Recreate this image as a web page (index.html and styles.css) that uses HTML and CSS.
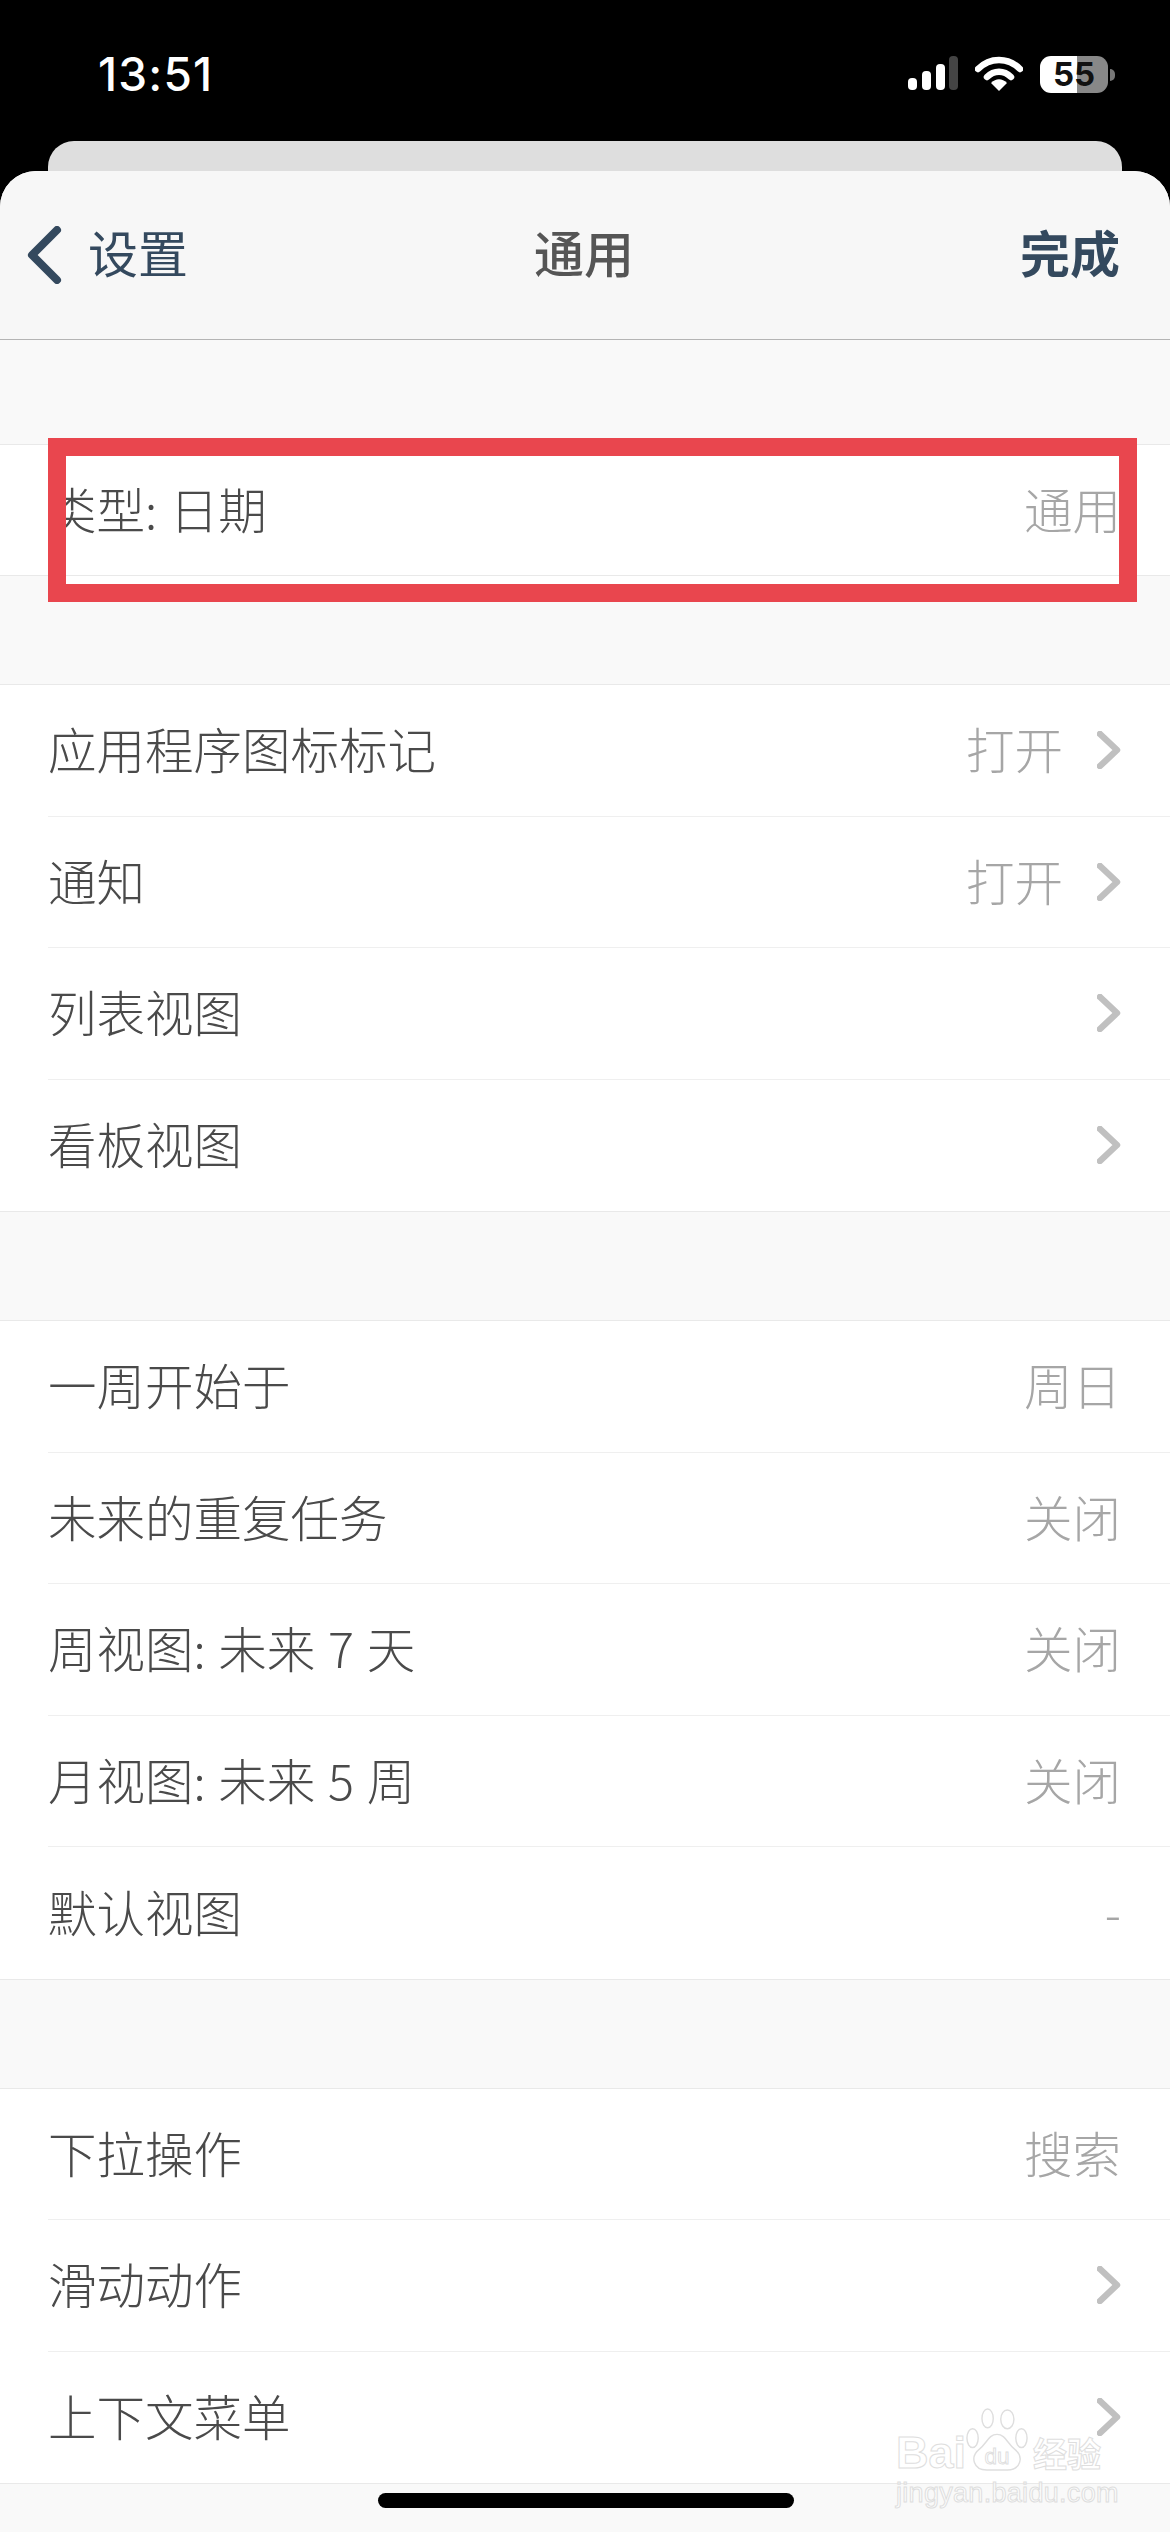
FILE: index.html
```html
<!DOCTYPE html>
<html lang="zh-CN">
  <head>
    <meta charset="UTF-8" />
    <meta name="viewport" content="width=device-width, initial-scale=1.0" />
    <title>通用</title>
    <link rel="stylesheet" href="styles.css">
  </head>
  <body>
    <div class="status">
      <span class="time">13:51</span>
      <div class="status-icons">
        <svg class="signal" width="50" height="34" viewBox="0 0 50 34">
          <rect x="0" y="22" width="9" height="12" rx="4" fill="#fff" />
          <rect x="14" y="15" width="9" height="19" rx="4" fill="#fff" />
          <rect x="28" y="8" width="9" height="26" rx="4" fill="#fff" />
          <rect x="41" y="0" width="9" height="34" rx="4" fill="#444" />
        </svg>
        <svg class="wifi" width="48" height="35" viewBox="0 0 48 35">
          <path d="M3 13 C15 1 33 1 45 13" fill="none" stroke="#fff" stroke-width="6.5" stroke-linecap="round" />
          <path d="M12 21 C19 14 29 14 36 21" fill="none" stroke="#fff" stroke-width="6.5" stroke-linecap="round" />
          <path d="M16 27 C21 22 27 22 32 27 L24 35 Z" fill="#fff" />
        </svg>
        <div class="battery">
          <div class="battery-body"><span class="battery-level">55</span></div>
          <span class="battery-nub"></span>
        </div>
      </div>
    </div>
    <div class="back-card"></div>

    <div class="sheet">
      <div class="nav">
        <div class="nav-back">
          <svg width="36" height="58" viewBox="0 0 36 58">
            <path d="M31 4 L6 29 L31 54" fill="none" stroke="#34495e" stroke-width="8" stroke-linecap="round" stroke-linejoin="round" />
          </svg>
          <span class="nav-text">设置</span>
        </div>
        <div class="nav-title nav-text">通用</div>
        <div class="nav-done nav-text">完成</div>
      </div>

      <div class="group group-first">
        <div class="row">
          <span class="label">类型: 日期</span>
          <span class="value">通用</span>
        </div>
        <div class="marker"></div>
      </div>

      <div class="group">
        <div class="row">
          <span class="label">应用程序图标标记</span>
          <span class="value">打开</span>
          <svg class="chevron" width="24" height="38" viewBox="0 0 24 38"><path d="M3 3 L20 19 L3 35" /></svg>
        </div>
        <div class="row">
          <span class="label">通知</span>
          <span class="value">打开</span>
          <svg class="chevron" width="24" height="38" viewBox="0 0 24 38"><path d="M3 3 L20 19 L3 35" /></svg>
        </div>
        <div class="row">
          <span class="label">列表视图</span>
          <svg class="chevron" width="24" height="38" viewBox="0 0 24 38"><path d="M3 3 L20 19 L3 35" /></svg>
        </div>
        <div class="row">
          <span class="label">看板视图</span>
          <svg class="chevron" width="24" height="38" viewBox="0 0 24 38"><path d="M3 3 L20 19 L3 35" /></svg>
        </div>
      </div>

      <div class="group">
        <div class="row">
          <span class="label">一周开始于</span>
          <span class="value">周日</span>
        </div>
        <div class="row">
          <span class="label">未来的重复任务</span>
          <span class="value">关闭</span>
        </div>
        <div class="row">
          <span class="label">周视图: 未来 7 天</span>
          <span class="value">关闭</span>
        </div>
        <div class="row">
          <span class="label">月视图: 未来 5 周</span>
          <span class="value">关闭</span>
        </div>
        <div class="row">
          <span class="label">默认视图</span>
          <span class="value">-</span>
        </div>
      </div>

      <div class="group">
        <div class="row">
          <span class="label">下拉操作</span>
          <span class="value">搜索</span>
        </div>
        <div class="row">
          <span class="label">滑动动作</span>
          <svg class="chevron" width="24" height="38" viewBox="0 0 24 38"><path d="M3 3 L20 19 L3 35" /></svg>
        </div>
        <div class="row">
          <span class="label">上下文菜单</span>
          <svg class="chevron" width="24" height="38" viewBox="0 0 24 38"><path d="M3 3 L20 19 L3 35" /></svg>
        </div>
      </div>

      <div class="home-bar"></div>

      <div class="watermark">
        <div class="wm-logo">
          <span class="wm-text">Bai</span>
          <svg class="wm-paw" width="62" height="66" viewBox="0 0 66 68">
            <ellipse cx="7" cy="32" rx="6" ry="10" />
            <ellipse cx="23" cy="11" rx="6" ry="10" />
            <ellipse cx="44" cy="12" rx="7" ry="10" />
            <ellipse cx="59" cy="32" rx="6" ry="10" />
            <path d="M33 28 C24 28 22 38 14 44 C4 52 8 66 22 66 L44 66 C58 66 62 52 52 44 C44 38 42 28 33 28 Z" />
            <text x="33" y="60" text-anchor="middle">du</text>
          </svg>
          <span class="wm-text wm-cn">经验</span>
        </div>
        <div class="wm-url">jingyan.baidu.com</div>
      </div>
    </div>
  </body>
</html>
```

FILE: styles.css
```css
html,
body {
  margin: 0;
  background: #000;
}
body {
  width: 1170px;
  height: 2532px;
  overflow: hidden;
  font-family: "Noto Sans CJK SC", "Liberation Sans", sans-serif;
}

/* status bar */
.status {
  height: 141px;
  box-sizing: border-box;
  padding: 50px 55px 0 98px;
  display: flex;
  justify-content: space-between;
  align-items: flex-start;
}
.time {
  font-family: Inter, "Liberation Sans", sans-serif;
  font-size: 46px;
  line-height: 48px;
  font-weight: 500;
  letter-spacing: 1.2px;
  color: #fff;
}
.status-icons {
  display: flex;
  align-items: flex-start;
  gap: 17px;
  padding-top: 6px;
}
.battery {
  display: flex;
  align-items: center;
  gap: 2px;
}
.battery-body {
  width: 68px;
  height: 37px;
  border-radius: 11px;
  background: linear-gradient(90deg, #fff 37px, #888 37px);
  display: flex;
  align-items: center;
  justify-content: center;
}
.battery-level {
  font-family: Inter, "Liberation Sans", sans-serif;
  font-size: 33px;
  line-height: 37px;
  font-weight: 700;
  color: #111;
}
.battery-nub {
  width: 5px;
  height: 12px;
  border-radius: 0 6px 6px 0;
  background: #777;
}

.back-card {
  height: 30px;
  margin: 0 48px;
  background: #dedede;
  border-radius: 26px 26px 0 0;
}

/* main sheet */
.sheet {
  position: relative;
  height: 2361px;
  background: #f9f9f9;
  border-radius: 36px 36px 0 0;
}
.nav {
  height: 169px;
  box-sizing: border-box;
  padding: 0 50px 0 52px;
  background: #f7f7f7;
  border-bottom: 1px solid #b4b4b4;
  border-radius: 36px 36px 0 0;
  display: grid;
  grid-template-columns: 1fr auto 1fr;
  align-items: center;
  font-size: 50px;
}
.nav-text {
  padding-bottom: 8px;
}
.nav-back {
  display: flex;
  align-items: center;
  gap: 26px;
  margin-left: -26px;
  color: #34495e;
}
.nav-title {
  margin-left: -4px;
  color: #555;
  font-weight: 500;
}
.nav-done {
  text-align: right;
  color: #34495e;
  font-weight: 700;
}

/* list groups */
.group {
  margin-top: 108px;
  background: #fff;
  border-top: 1px solid #e9e9e9;
  border-bottom: 1px solid #e9e9e9;
}
.group-first {
  position: relative;
  margin-top: 104px;
}
.row {
  height: 131.5px;
  box-sizing: border-box;
  margin-left: 48px;
  padding: 0 49px 4px 0;
  border-bottom: 1px solid #efefef;
  display: flex;
  align-items: center;
  font-size: 48.5px;
  word-spacing: 2px;
}
.row:last-child {
  border-bottom: none;
}
.group-first .row {
  height: 130px;
  border-bottom: none;
}
.label {
  flex: 1;
  color: #4a4a4a;
  font-weight: 300;
}
.value {
  color: #a6a6a6;
  font-weight: 300;
}
.chevron {
  margin: 4px 0 0 34px;
  fill: none;
  stroke: #c0c0c0;
  stroke-width: 6.5;
  stroke-linecap: round;
  stroke-linejoin: round;
}

/* red annotation drawn over the first row */
.marker {
  position: absolute;
  top: -7px;
  left: 48px;
  width: 1089px;
  height: 164px;
  box-sizing: border-box;
  border: 18px solid #e9464e;
  background: linear-gradient(transparent 120px, #fff 120px);
}

.home-bar {
  position: absolute;
  left: 378px;
  bottom: 24px;
  width: 416px;
  height: 15px;
  border-radius: 8px;
  background: #000;
}

/* watermark */
.watermark {
  position: absolute;
  left: 896px;
  bottom: 24px;
  width: 212px;
  color: rgba(255, 255, 255, 0.6);
  pointer-events: none;
}
.wm-logo {
  display: flex;
  align-items: flex-end;
  height: 66px;
  white-space: nowrap;
}
.wm-text {
  flex: none;
  font-family: "Liberation Sans", sans-serif;
  font-size: 45px;
  line-height: 40px;
  font-weight: 700;
  -webkit-text-stroke: 1px #dedede;
}
.wm-cn {
  font-family: "Noto Sans CJK SC", sans-serif;
  font-size: 34px;
  margin-left: 5px;
}
.wm-paw {
  flex: none;
  fill: rgba(255, 255, 255, 0.6);
  stroke: #dedede;
  stroke-width: 1.5;
}
.wm-paw text {
  font-family: "Liberation Sans", sans-serif;
  font-size: 24px;
  stroke-width: 1;
}
.wm-url {
  margin-top: 5px;
  font-family: "Liberation Sans", sans-serif;
  font-size: 27px;
  line-height: 30px;
  letter-spacing: 0.3px;
  -webkit-text-stroke: 1px #dedede;
}
```
